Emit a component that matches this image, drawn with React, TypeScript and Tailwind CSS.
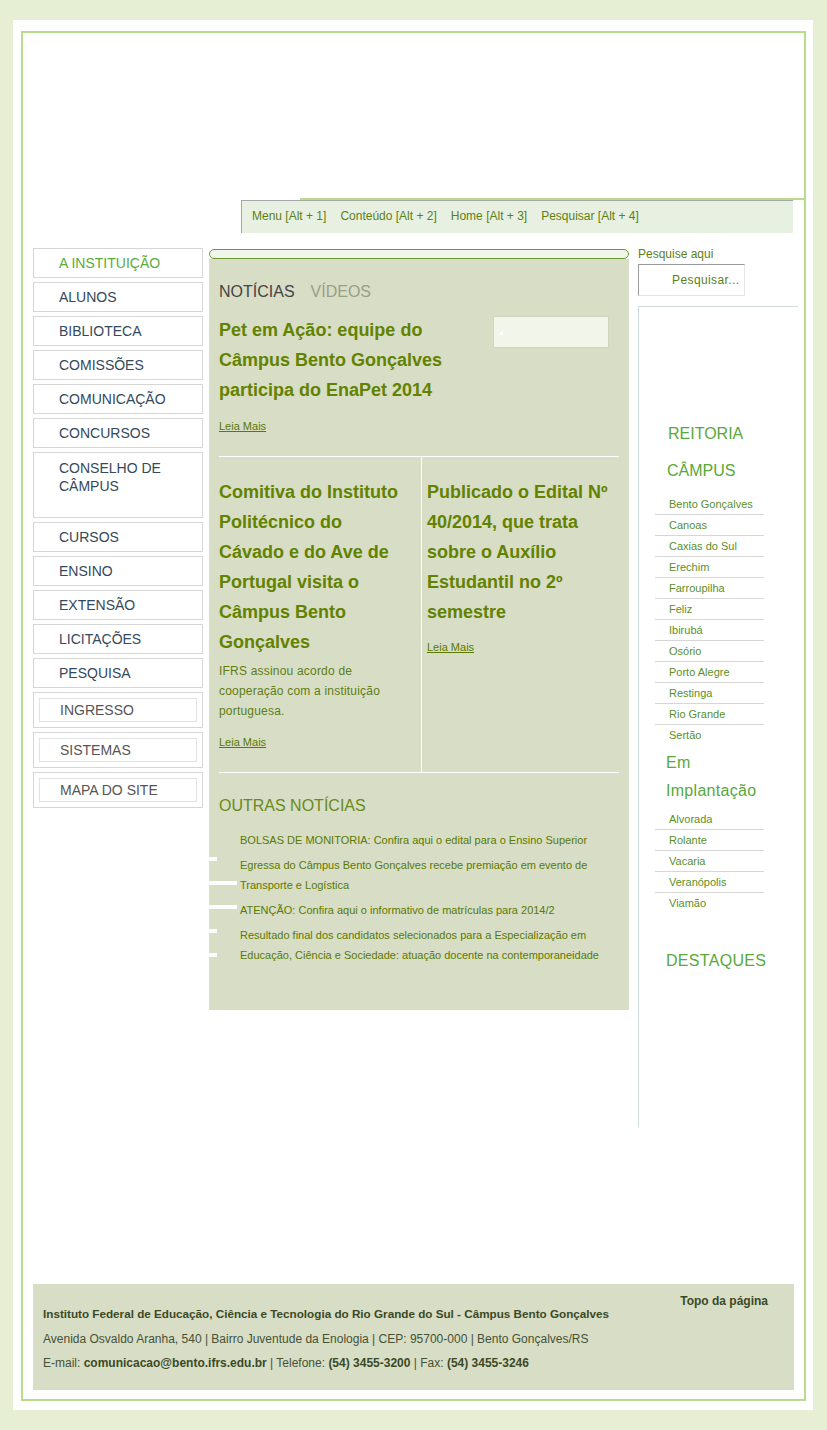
const leftMenu = [
  { label: "A INSTITUIÇÃO", active: true },
  { label: "ALUNOS" },
  { label: "BIBLIOTECA" },
  { label: "COMISSÕES" },
  { label: "COMUNICAÇÃO" },
  { label: "CONCURSOS" },
  { label: "CONSELHO DE CÂMPUS", tall: true },
  { label: "CURSOS" },
  { label: "ENSINO" },
  { label: "EXTENSÃO" },
  { label: "LICITAÇÕES" },
  { label: "PESQUISA" },
];

const boxedMenu = ["INGRESSO", "SISTEMAS", "MAPA DO SITE"];

const navLinks = ["Menu [Alt + 1]", "Conteúdo [Alt + 2]", "Home [Alt + 3]", "Pesquisar [Alt + 4]"];

const otherNews = [
  "BOLSAS DE MONITORIA: Confira aqui o edital para o Ensino Superior",
  "Egressa do Câmpus Bento Gonçalves recebe premiação em evento de Transporte e Logística",
  "ATENÇÃO: Confira aqui o informativo de matrículas para 2014/2",
  "Resultado final dos candidatos selecionados para a Especialização em Educação, Ciência e Sociedade: atuação docente na contemporaneidade",
];

const campus = [
  "Bento Gonçalves",
  "Canoas",
  "Caxias do Sul",
  "Erechim",
  "Farroupilha",
  "Feliz",
  "Ibirubá",
  "Osório",
  "Porto Alegre",
  "Restinga",
  "Rio Grande",
  "Sertão",
];

const implantacao = ["Alvorada", "Rolante", "Vacaria", "Veranópolis", "Viamão"];

// white tick marks that stick out on the left of the news panel
const ticks = [
  { top: 598, w: "w-[8px]" },
  { top: 622, w: "w-[28px]" },
  { top: 646, w: "w-[28px]" },
  { top: 670, w: "w-[8px]" },
  { top: 694, w: "w-[8px]" },
];

function LeiaMais() {
  return (
    <a className="block text-[11px] leading-[20px] text-[#5a7a00] underline" href="#">
      Leia Mais
    </a>
  );
}

export default function App() {
  return (
    <div className="min-h-[1430px] bg-[#e6efd4] pl-[13px] pt-[20px] font-['Liberation_Sans',Arial,sans-serif]">
      <div className="w-[800px] bg-white pl-[8px] pr-[7px] pt-[11px] pb-[9px]">
        <div className="flex h-[1370px] flex-col border-2 border-[#b9dc8b]">
          {/* Header */}
          <div className="h-[165px]" />
          <div className="ml-[277px] h-[2px] bg-[#b9dc8b]" />
          <div className="ml-[218px] flex h-[33px] w-[552px] gap-[14px] border-l border-t border-[#a6a6a6] bg-[#e8f1e1] pl-[10px] pt-[8px] text-[12px] leading-[14px] text-[#5d7f14]">
            {navLinks.map((n) => (
              <span key={n}>{n}</span>
            ))}
          </div>

          {/* Main columns */}
          <div className="mt-[15px] flex items-start">
            {/* Left menu */}
            <div className="ml-[10px] flex w-[170px] flex-col gap-[4px]">
              {leftMenu.map((m) => (
                <div
                  key={m.label}
                  className={`border border-[#d6d6d6] pl-[25px] text-[14px] ${
                    m.tall ? "h-[66px] w-[170px] pr-[20px] pt-[6px] leading-[18px]" : "h-[30px] leading-[28px]"
                  } ${m.active ? "text-[#5aaa3c]" : "text-[#34495a]"}`}
                >
                  {m.label}
                </div>
              ))}
              {boxedMenu.map((m) => (
                <div key={m} className="h-[36px] border border-[#d6d6d6] p-[5px]">
                  <div className="h-[24px] border border-[#e2e2e2] pl-[20px] text-[14px] leading-[22px] text-[#555]">
                    {m}
                  </div>
                </div>
              ))}
            </div>

            {/* Center news */}
            <div className="ml-[6px] mt-[1px] w-[420px]">
              <div className="h-[10px] rounded-full border border-[#6b9b32] bg-[#f1f6ea]" />
              <div className="relative h-[751px] bg-[#d8ddc5] px-[10px] pt-[24px]">
                {ticks.map((t, i) => (
                  <span
                    key={i}
                    className={`absolute left-0 h-[4px] bg-white ${t.w}`}
                    style={{ top: t.top }}
                  />
                ))}
                <div className="flex gap-[16px] text-[16px] leading-[18px]">
                  <span className="text-[#444]">NOTÍCIAS</span>
                  <span className="text-[#9a9f85]">VÍDEOS</span>
                </div>

                <div className="mt-[14px] flex items-start justify-between">
                  <h2 className="w-[260px] text-[18px] font-bold leading-[30px] text-[#628200]">
                    Pet em Ação: equipe do Câmpus Bento Gonçalves participa do EnaPet 2014
                  </h2>
                  <div className="relative mr-[10px] mt-[1px] h-[32px] w-[116px] border border-[#cfd5bf] bg-[#f2f6ea]">
                    <span className="absolute left-[6px] top-[15px] h-[3px] w-[3px] bg-white" />
                  </div>
                </div>
                <div className="mt-[11px]">
                  <LeiaMais />
                </div>

                <div className="mt-[20px] flex border-b border-t border-white">
                  <div className="w-[203px] border-r border-white pb-[20px] pt-[20px]">
                    <h3 className="w-[185px] text-[18px] font-bold leading-[30px] text-[#628200]">
                      Comitiva do Instituto Politécnico do Cávado e do Ave de Portugal visita o Câmpus Bento Gonçalves
                    </h3>
                    <p className="mt-[4px] w-[180px] text-[12px] leading-[20px] tracking-[0.2px] text-[#5f7d10]">
                      IFRS assinou acordo de cooperação com a instituição portuguesa.
                    </p>
                    <div className="mt-[11px]">
                      <LeiaMais />
                    </div>
                  </div>
                  <div className="pl-[5px] pt-[20px]">
                    <h3 className="w-[192px] text-[18px] font-bold leading-[30px] text-[#628200]">
                      Publicado o Edital Nº 40/2014, que trata sobre o Auxílio Estudantil no 2º semestre
                    </h3>
                    <div className="mt-[10px]">
                      <LeiaMais />
                    </div>
                  </div>
                </div>

                <h4 className="mt-[24px] text-[16px] leading-[18px] text-[#6a8a1a]">OUTRAS NOTÍCIAS</h4>
                <ul className="mt-[15px] flex w-[380px] flex-col gap-[5px] pl-[21px] text-[11px] leading-[20px] text-[#5a7a00]">
                  {otherNews.map((n) => (
                    <li key={n}>{n}</li>
                  ))}
                </ul>
              </div>
            </div>

            {/* Right sidebar */}
            <div className="ml-[9px] w-[160px]">
              <p className="text-[12px] leading-[12px] text-[#5d7f14]">Pesquise aqui</p>
              <div className="mt-[4px] h-[32px] w-[107px] border border-b-[#e6e6e6] border-l-[#9a9a9a] border-r-[#e6e6e6] border-t-[#9a9a9a] pl-[33px] text-[12px] leading-[30px] tracking-[0.4px] text-[#5d7f14]">
                Pesquisar...
              </div>
              <div className="mt-[10px] h-[821px] border-l border-t border-[#cfdcdc] pt-[108px]">
                <h3 className="pl-[29px] text-[16px] leading-[37px] text-[#58a83a]">REITORIA</h3>
                <h3 className="pl-[28px] text-[16px] leading-[37px] text-[#58a83a]">CÂMPUS</h3>
                <ul className="ml-[16px] mt-[5px] w-[109px]">
                  {campus.map((c, i) => (
                    <li
                      key={c}
                      className={`h-[21px] pl-[14px] text-[11px] leading-[20px] text-[#5a8f2a] ${
                        i < campus.length - 1 ? "border-b border-[#d6d6d6]" : ""
                      }`}
                    >
                      {c}
                    </li>
                  ))}
                </ul>
                <h3 className="mt-[3px] pl-[27px] pr-[20px] text-[16px] leading-[28px] tracking-[0.3px] text-[#58a83a]">
                  Em Implantação
                </h3>
                <ul className="ml-[16px] mt-[4px] w-[109px]">
                  {implantacao.map((c, i) => (
                    <li
                      key={c}
                      className={`h-[21px] pl-[14px] text-[11px] leading-[20px] text-[#5a8f2a] ${
                        i < implantacao.length - 1 ? "border-b border-[#d6d6d6]" : ""
                      }`}
                    >
                      {c}
                    </li>
                  ))}
                </ul>
                <h3 className="mt-[33px] pl-[27px] text-[16px] leading-[28px] tracking-[0.3px] text-[#58a83a]">DESTAQUES</h3>
              </div>
            </div>
          </div>

          {/* Footer */}
          <div className="mb-[9px] ml-[10px] mt-auto h-[106px] w-[761px] bg-[#d8ddc5] pl-[10px] pr-[26px] pt-[10px] text-[12px] text-[#465236]">
            <p className="text-right font-bold leading-[14px] text-[#3b4a26]">Topo da página</p>
            <p className="-mt-[1px] text-[11.7px] font-bold leading-[14px] text-[#3b4a26]">
              Instituto Federal de Educação, Ciência e Tecnologia do Rio Grande do Sul - Câmpus Bento Gonçalves
            </p>
            <p className="mt-[6px] leading-[24px]">
              Avenida Osvaldo Aranha, 540 | Bairro Juventude da Enologia | CEP: 95700-000 | Bento Gonçalves/RS
            </p>
            <p className="leading-[24px]">
              E-mail: <b className="text-[#3b4a26]">comunicacao@bento.ifrs.edu.br</b> | Telefone:{" "}
              <b className="text-[#3b4a26]">(54) 3455-3200</b> | Fax: <b className="text-[#3b4a26]">(54) 3455-3246</b>
            </p>
          </div>
        </div>
      </div>
    </div>
  );
}
